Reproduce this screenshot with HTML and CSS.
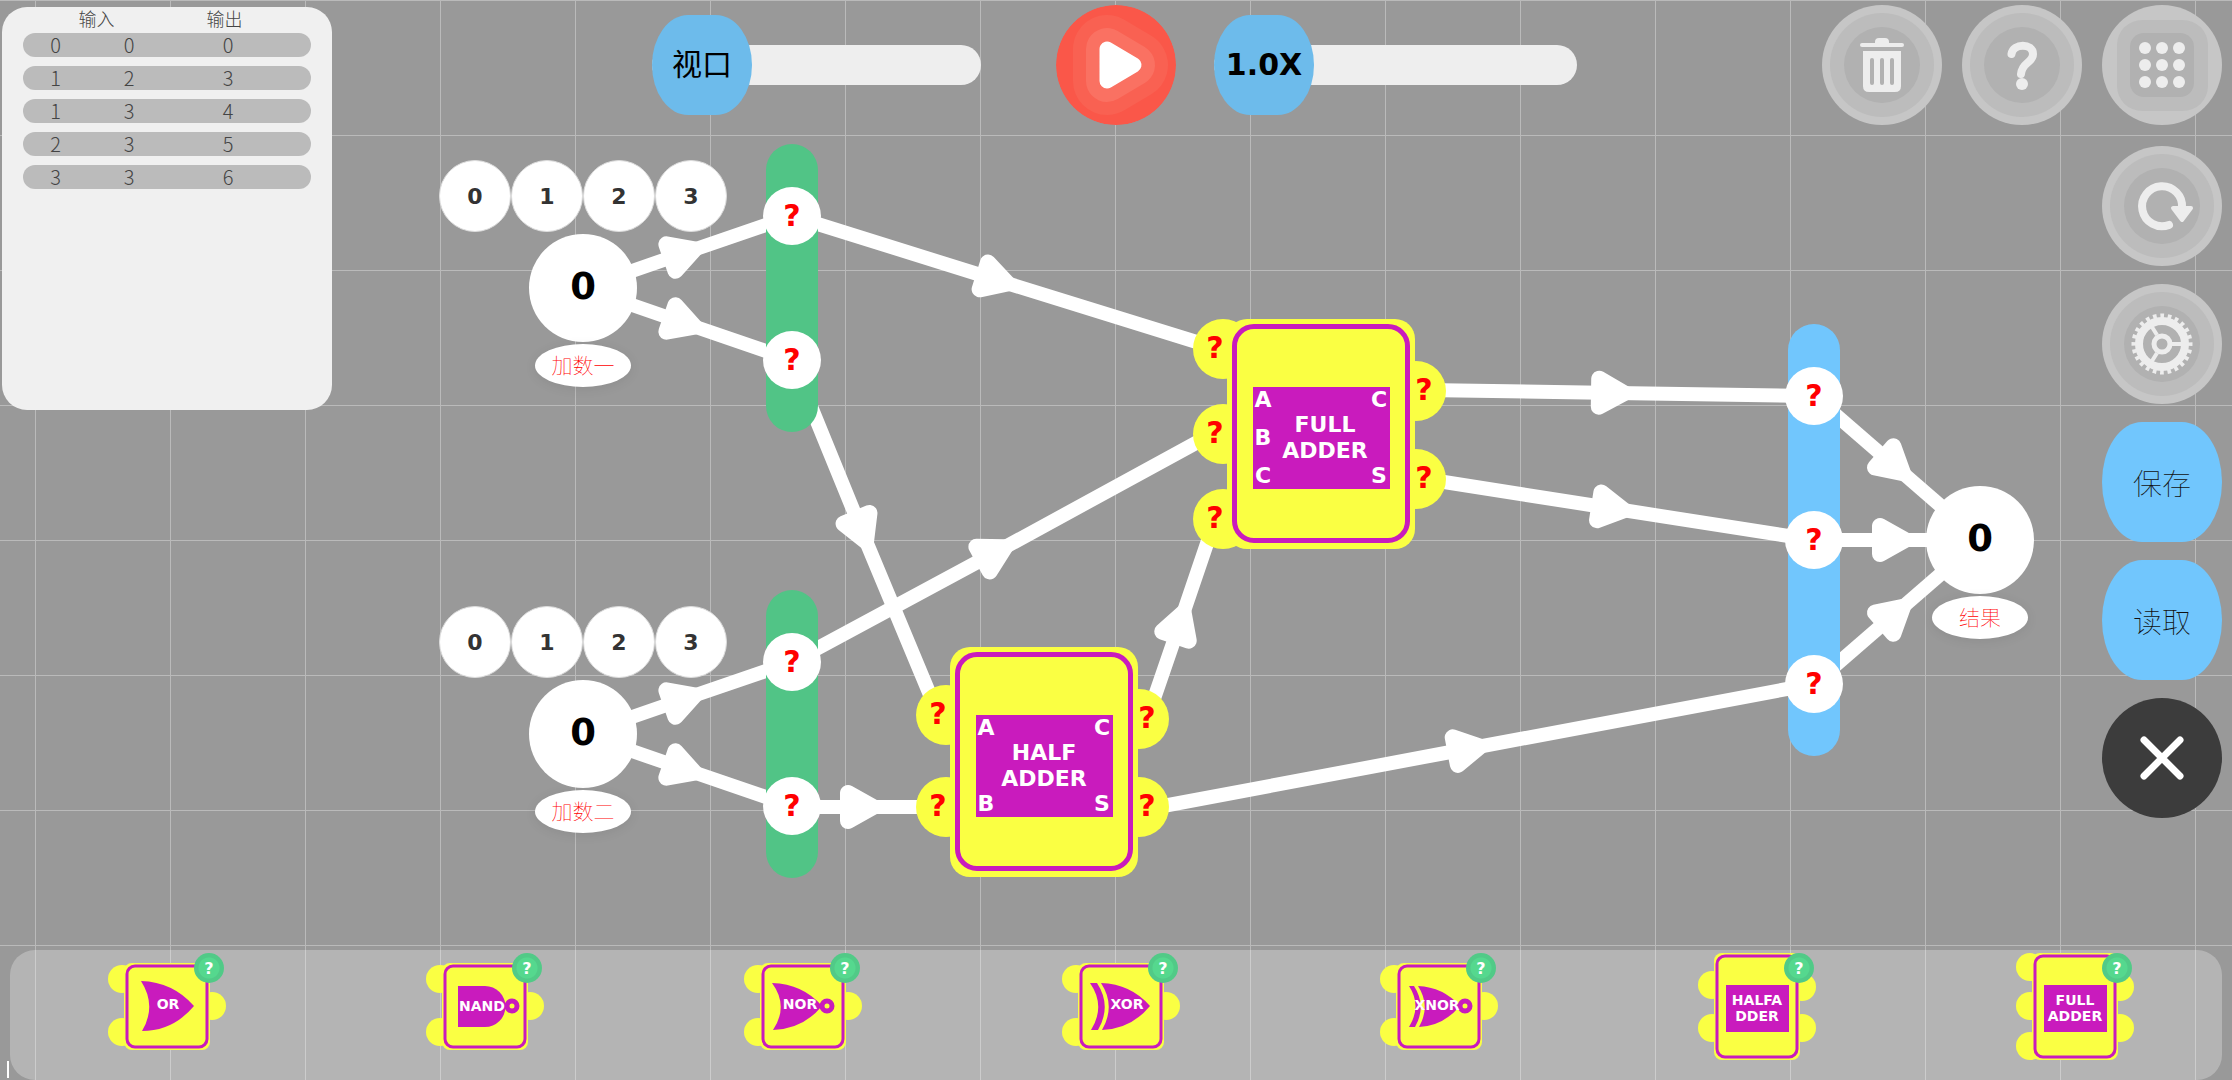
FILE: index.html
```
<!DOCTYPE html>
<html lang="zh-CN">
<head>
<meta charset="utf-8">
<title>加法器</title>
<link rel="stylesheet" href="styles.css">
</head>
<body>
<div class="app">
  <div class="canvas">
    <svg class="links" aria-hidden="true">
      <defs>
        <marker id="arrow" markerUnits="userSpaceOnUse" markerWidth="60" markerHeight="60" refX="3" orient="auto" overflow="visible">
          <path class="arrow" d="M-14 -14V14L11 0Z"/>
        </marker>
      </defs>
      <path d="M583 288L687 252L792 216"/>
      <path d="M583 288L687 324L792 360"/>
      <path d="M583 734L687 698L792 662"/>
      <path d="M583 734L687 770L792 806"/>
      <path d="M792 216L1000 281L1216 348"/>
      <path d="M792 360L863 534L938 714"/>
      <path d="M792 662L998 551L1216 432"/>
      <path d="M792 807L865 807L938 807"/>
      <path d="M1147 719L1181 620L1216 517"/>
      <path d="M1147 809L1472 748L1814 684"/>
      <path d="M1425 390L1616 393L1814 396"/>
      <path d="M1425 479L1616 509L1814 540"/>
      <path d="M1814 396L1897 468L1980 540"/>
      <path d="M1814 540L1897 540L1980 540"/>
      <path d="M1814 684L1897 612L1980 540"/>
    </svg>

    <div class="choices choices-a"><button>0</button><button>1</button><button>2</button><button>3</button></div>
    <div class="value value-a">0</div>
    <div class="tag tag-a">加数一</div>
    <div class="bus bus-a"><span class="pin">?</span><span class="pin">?</span></div>

    <div class="choices choices-b"><button>0</button><button>1</button><button>2</button><button>3</button></div>
    <div class="value value-b">0</div>
    <div class="tag tag-b">加数二</div>
    <div class="bus bus-b"><span class="pin">?</span><span class="pin">?</span></div>

    <div class="bus bus-out"><span class="pin">?</span><span class="pin">?</span><span class="pin">?</span></div>
    <div class="value value-out">0</div>
    <div class="tag tag-out">结果</div>

    <div class="chip chip-half">
      <div class="ports ports-in"><span>?</span><span>?</span></div>
      <div class="ports ports-out"><span>?</span><span>?</span></div>
      <div class="body"><div class="face">
        <div class="names"><span>A</span><span>B</span></div>
        <div class="title">HALF<br>ADDER</div>
        <div class="names names-out"><span>C</span><span>S</span></div>
      </div></div>
    </div>

    <div class="chip chip-full">
      <div class="ports ports-in"><span>?</span><span>?</span><span>?</span></div>
      <div class="ports ports-out"><span>?</span><span>?</span></div>
      <div class="body"><div class="face">
        <div class="names"><span>A</span><span>B</span><span>C</span></div>
        <div class="title">FULL<br>ADDER</div>
        <div class="names names-out"><span>C</span><span>S</span></div>
      </div></div>
    </div>
  </div>

  <section class="truth">
    <table>
      <thead><tr><th colspan="2">输入</th><th>输出</th></tr></thead>
      <tbody>
        <tr><td>0</td><td>0</td><td>0</td></tr>
        <tr><td>1</td><td>2</td><td>3</td></tr>
        <tr><td>1</td><td>3</td><td>4</td></tr>
        <tr><td>2</td><td>3</td><td>5</td></tr>
        <tr><td>3</td><td>3</td><td>6</td></tr>
      </tbody>
    </table>
  </section>

  <header class="toolbar">
    <div class="slider slider-view"><input id="view" type="range" min="0" max="100" value="0"><label for="view">视口</label></div>
    <button class="play" aria-label="运行">
      <svg viewBox="0 0 120 120">
        <circle cx="60" cy="60" r="60" fill="#fa5749"/>
        <g stroke-linejoin="round">
          <path d="M51 44V76L78 60Z" fill="#f96152" stroke="#f96152" stroke-width="68"/>
          <path d="M51 44V76L78 60Z" fill="#fa7162" stroke="#fa7162" stroke-width="42"/>
          <path d="M51 44V76L78 60Z" fill="#fff" stroke="#fff" stroke-width="15"/>
        </g>
      </svg>
    </button>
    <div class="slider slider-speed"><input id="speed" type="range" min="1" max="10" value="1"><label for="speed">1.0X</label></div>
  </header>

  <nav class="rail">
    <div class="rail-top">
      <button class="round" aria-label="删除">
        <svg viewBox="0 0 120 120">
          <circle cx="60" cy="60" r="60" fill="#c6c6c6"/><circle cx="60" cy="60" r="52" fill="#bcbcbc"/><circle cx="60" cy="60" r="38" fill="#b1b1b1"/>
          <rect x="38" y="38" width="44" height="4" rx="2" fill="#ededed"/>
          <path d="M53 38V37Q53 33 57 33H63Q67 33 67 37V38Z" fill="#ededed"/>
          <path d="M41 46H79V81Q79 87 73 87H47Q41 87 41 81Z" fill="#ededed"/>
          <path d="M50 55V78M60 55V78M70 55V78" stroke="#b1b1b1" stroke-width="4" stroke-linecap="round"/>
        </svg>
      </button>
      <button class="round" aria-label="帮助">
        <svg viewBox="0 0 120 120">
          <circle cx="60" cy="60" r="60" fill="#c6c6c6"/><circle cx="60" cy="60" r="52" fill="#bcbcbc"/><circle cx="60" cy="60" r="38" fill="#b1b1b1"/>
          <path d="M49.500 49C51 38 71 38 71 49C71 58 60 57 59 69" fill="none" stroke="#ededed" stroke-width="8" stroke-linecap="round"/>
          <circle cx="60" cy="79" r="6" fill="#ededed"/>
        </svg>
      </button>
      <button class="round" aria-label="关卡">
        <svg viewBox="0 0 120 120">
          <circle cx="60" cy="60" r="60" fill="#c6c6c6"/><rect x="15" y="15" width="91" height="91" rx="25" fill="#bcbcbc"/><rect x="28" y="28" width="64" height="64" rx="14" fill="#b1b1b1"/>
          <g fill="#ededed"><circle cx="43" cy="43" r="6"/><circle cx="60" cy="43" r="6"/><circle cx="77" cy="43" r="6"/><circle cx="43" cy="60" r="6"/><circle cx="60" cy="60" r="6"/><circle cx="77" cy="60" r="6"/><circle cx="43" cy="77" r="6"/><circle cx="60" cy="77" r="6"/><circle cx="77" cy="77" r="6"/></g>
        </svg>
      </button>
    </div>
    <button class="round" aria-label="重置">
      <svg viewBox="0 0 120 120">
        <circle cx="60" cy="60" r="60" fill="#c6c6c6"/><circle cx="60" cy="60" r="52" fill="#bcbcbc"/><circle cx="60" cy="60" r="38" fill="#b1b1b1"/>
        <path d="M67 79A20 20 0 1 1 80 62" fill="none" stroke="#ededed" stroke-width="8" stroke-linecap="round"/>
        <path d="M71 62H89L80 74Z" fill="#ededed" stroke="#ededed" stroke-width="4" stroke-linejoin="round"/>
      </svg>
    </button>
    <button class="round" aria-label="设置">
      <svg viewBox="0 0 120 120">
        <circle cx="60" cy="60" r="60" fill="#c6c6c6"/><circle cx="60" cy="60" r="52" fill="#bcbcbc"/><circle cx="60" cy="60" r="38" fill="#b1b1b1"/>
        <g fill="none" stroke="#ededed">
          <circle cx="60" cy="60" r="23" stroke-width="8"/>
          <circle cx="60" cy="60" r="28" stroke-width="5" stroke-dasharray="3.66 3.67" stroke-dashoffset="1.83"/>
          <circle cx="60" cy="60" r="8" stroke-width="5"/>
          <path d="M70 60H80M55 51L50 43M55 69L50 77" stroke-width="4"/>
        </g>
      </svg>
    </button>
    <button class="soft">保存</button>
    <button class="soft">读取</button>
    <button class="round" aria-label="关闭">
      <svg viewBox="0 0 120 120">
        <circle cx="60" cy="60" r="60" fill="#3c3c3c"/>
        <path d="M42 42L78 78M78 42L42 78" stroke="#fff" stroke-width="7" stroke-linecap="round"/>
      </svg>
    </button>
  </nav>

  <footer class="palette">
    <div class="gate">
      <svg viewBox="0 0 120 130">
        <g class="shell"><circle cx="15" cy="29" r="14"/><circle cx="15" cy="82" r="14"/><circle cx="105" cy="56" r="14"/><rect x="17" y="13" width="86" height="87" rx="8"/></g>
        <rect class="frame" x="20" y="16" width="80" height="81" rx="8"/>
        <path class="mark" d="M34 31Q66 32 87 56Q66 81 35 81Q50 56 34 31Z"/>
        <text x="61" y="59">OR</text>
      </svg>
      <button class="info">?</button>
    </div>
    <div class="gate">
      <svg viewBox="0 0 120 130">
        <g class="shell"><circle cx="15" cy="29" r="14"/><circle cx="15" cy="82" r="14"/><circle cx="105" cy="56" r="14"/><rect x="17" y="13" width="86" height="87" rx="8"/></g>
        <rect class="frame" x="20" y="16" width="80" height="81" rx="8"/>
        <path class="mark" d="M33 36H60A20 20 0 0 1 60 77H33Z"/><circle class="bubble" cx="87" cy="56" r="5"/>
        <text x="57" y="61">NAND</text>
      </svg>
      <button class="info">?</button>
    </div>
    <div class="gate">
      <svg viewBox="0 0 120 130">
        <g class="shell"><circle cx="15" cy="29" r="14"/><circle cx="15" cy="82" r="14"/><circle cx="105" cy="56" r="14"/><rect x="17" y="13" width="86" height="87" rx="8"/></g>
        <rect class="frame" x="20" y="16" width="80" height="81" rx="8"/>
        <path class="mark" d="M29 33Q60 34 79 56Q60 79 30 80Q46 56 29 33Z"/><circle class="bubble" cx="84" cy="56" r="5"/>
        <text x="57" y="59">NOR</text>
      </svg>
      <button class="info">?</button>
    </div>
    <div class="gate">
      <svg viewBox="0 0 120 130">
        <g class="shell"><circle cx="15" cy="29" r="14"/><circle cx="15" cy="82" r="14"/><circle cx="105" cy="56" r="14"/><rect x="17" y="13" width="86" height="87" rx="8"/></g>
        <rect class="frame" x="20" y="16" width="80" height="81" rx="8"/>
        <path class="mark" d="M29 33H36Q51 56 37 80H30Q45 56 29 33ZM40 33Q70 34 89 56Q70 79 41 80Q55 56 40 33Z"/>
        <text x="66" y="59">XOR</text>
      </svg>
      <button class="info">?</button>
    </div>
    <div class="gate">
      <svg viewBox="0 0 120 130">
        <g class="shell"><circle cx="15" cy="29" r="14"/><circle cx="15" cy="82" r="14"/><circle cx="105" cy="56" r="14"/><rect x="17" y="13" width="86" height="87" rx="8"/></g>
        <rect class="frame" x="20" y="16" width="80" height="81" rx="8"/>
        <path class="mark" d="M30 36H35Q48 56 36 77H30Q43 56 30 36ZM39 36Q64 37 81 56Q64 76 40 77Q52 56 39 36Z"/><circle class="bubble" cx="86" cy="56" r="5"/>
        <text x="58" y="60">XNOR</text>
      </svg>
      <button class="info">?</button>
    </div>
    <div class="gate">
      <svg viewBox="0 0 120 130">
        <g class="shell"><circle cx="15" cy="35" r="14"/><circle cx="15" cy="78" r="14"/><circle cx="105" cy="37" r="14"/><circle cx="105" cy="78" r="14"/><rect x="17" y="3" width="86" height="107" rx="8"/></g>
        <rect class="frame" x="20" y="6" width="80" height="101" rx="8"/>
        <rect class="mark" x="29" y="35" width="63" height="47"/>
        <text x="60" y="55">HALFA</text><text x="60" y="71">DDER</text>
      </svg>
      <button class="info">?</button>
    </div>
    <div class="gate">
      <svg viewBox="0 0 120 130">
        <g class="shell"><circle cx="15" cy="17" r="14"/><circle cx="15" cy="56" r="14"/><circle cx="15" cy="96" r="14"/><circle cx="105" cy="37" r="14"/><circle cx="105" cy="78" r="14"/><rect x="17" y="3" width="86" height="107" rx="8"/></g>
        <rect class="frame" x="20" y="6" width="80" height="101" rx="8"/>
        <rect class="mark" x="29" y="35" width="63" height="47"/>
        <text x="60" y="55">FULL</text><text x="60" y="71">ADDER</text>
      </svg>
      <button class="info">?</button>
    </div>
  </footer>
  <span class="caret"></span>
</div>
</body>
</html>
```
FILE: styles.css
```
* { box-sizing: border-box; }

body {
  margin: 0;
  font-family: "DejaVu Sans", "Noto Sans CJK SC", sans-serif;
  background-color: #999;
  background-image:
    linear-gradient(90deg, #bababa 1px, transparent 1px),
    linear-gradient(#bababa 1px, transparent 1px);
  background-size: 135px 135px;
  background-position: 35px 0;
}

button {
  padding: 0;
  border: 0;
  background: none;
  font-family: inherit;
  cursor: pointer;
}

svg { display: block; }

.app {
  position: relative;
  display: grid;
  grid-template-columns: 1fr auto 1fr;
  grid-template-rows: 1fr auto;
  min-height: 100vh;
  overflow: hidden;
}

/* Input / output table */
.truth {
  position: relative;
  width: 330px;
  height: 403px;
  margin: 7px 0 0 2px;
  padding: 0 21px;
  border-radius: 25px;
  background: #f0f0f0;
  font-family: "Noto Sans CJK SC", sans-serif;
  font-weight: 300;
  color: #444;
}
.truth table { display: block; }
.truth thead, .truth tbody { display: grid; row-gap: 9px; }
.truth tr { display: grid; grid-template-columns: 65px 82px 1fr; }
.truth th { height: 26px; padding: 0; font-size: 18px; line-height: 23px; font-weight: 300; }
.truth th:first-child { grid-column: span 2; }
.truth th:last-child { padding-right: 32px; }
.truth td { padding: 0; font-size: 20px; line-height: 24px; text-align: center; }
.truth td:last-child { padding-right: 25px; }
.truth tbody tr { border-radius: 12px; background: #bbb; }

/* Top controls */
.toolbar {
  position: relative;
  display: flex;
  align-items: center;
  align-self: start;
  padding: 5px 3px 0 0;
}
.slider { position: relative; height: 100px; }
.slider-view { width: 329px; margin-right: 75px; }
.slider-speed { width: 363px; margin-left: 38px; }
.slider input {
  appearance: none;
  display: block;
  width: 100%;
  height: 100px;
  margin: 0;
  background: none;
}
.slider input::-webkit-slider-runnable-track {
  height: 40px;
  border-radius: 20px;
  background: #eee;
}
.slider input::-webkit-slider-thumb {
  appearance: none;
  width: 100px;
  height: 100px;
  margin-top: -30px;
  border-radius: 36px / 50px;
  background: #6dbbeb;
}
.slider label {
  position: absolute;
  inset: 0 auto 0 0;
  width: 100px;
  font-size: 30px;
  line-height: 100px;
  text-align: center;
  pointer-events: none;
}
.slider-speed label { font-weight: bold; }
.play { width: 120px; height: 120px; border-radius: 50%; overflow: hidden; }

/* Right-hand actions */
.rail {
  position: relative;
  display: flex;
  flex-direction: column;
  align-items: flex-end;
  gap: 18px;
  padding: 5px 10px 18px 0;
}
.rail-top { display: flex; gap: 20px; margin-bottom: 3px; }
.round, .soft { width: 120px; height: 120px; }
.round { border-radius: 50%; }
.soft {
  border-radius: 40px / 60px;
  background: #71c6fd;
  font-family: "Noto Sans CJK SC", sans-serif;
  font-size: 29px;
  font-weight: 100;
  color: #111;
}

/* Gate palette */
.palette {
  position: relative;
  grid-column: 1 / -1;
  display: grid;
  grid-template-columns: repeat(7, 1fr);
  column-gap: 24px;
  justify-items: center;
  margin: 0 10px;
  padding-left: 10px;
  border-radius: 25px;
  background: rgba(255, 255, 255, 0.27);
}
.gate { position: relative; width: 120px; height: 130px; }
.shell { fill: #faff43; }
.frame { fill: none; stroke: #c91bbd; stroke-width: 3; }
.mark { fill: #c91bbd; }
.bubble { fill: #faff43; stroke: #c91bbd; stroke-width: 5; }
.gate text { fill: #fff; font-size: 14px; font-weight: bold; text-anchor: middle; }
.info {
  position: absolute;
  top: 3px;
  right: 3px;
  width: 30px;
  height: 30px;
  border-radius: 50%;
  background: radial-gradient(circle, #55d88e 10px, #51ca87 11px);
  font-size: 16px;
  font-weight: bold;
  color: #fff;
}
.caret {
  position: absolute;
  left: 7px;
  bottom: 2px;
  width: 2px;
  height: 17px;
  background: #fff;
}

/* Circuit canvas */
.canvas { position: absolute; inset: 0; }
.canvas > * { position: absolute; }
.links { inset: 0; width: 100%; height: 100%; }
.links > path { fill: none; stroke: #fff; stroke-width: 14; marker-mid: url(#arrow); }
.arrow { fill: #fff; stroke: #fff; stroke-width: 16; stroke-linejoin: round; }

.choices { display: flex; left: 439px; }
.choices button {
  width: 72px;
  height: 72px;
  border: 1px solid #ddd;
  border-radius: 50%;
  background: #fff;
  font-size: 22px;
  font-weight: bold;
  color: #333;
}
.choices-a { top: 160px; }
.choices-b { top: 606px; }

.value {
  width: 108px;
  height: 108px;
  border-radius: 50%;
  background: #fff;
  font-size: 37px;
  font-weight: bold;
  line-height: 106px;
  text-align: center;
}
.value-a { left: 529px; top: 234px; }
.value-b { left: 529px; top: 680px; }
.value-out { left: 1926px; top: 486px; }

.tag {
  width: 96px;
  height: 43px;
  border-radius: 50%;
  background: #fff;
  box-shadow: 0 2px 12px rgba(0, 0, 0, 0.08);
  font-family: "Noto Sans CJK SC", sans-serif;
  font-size: 21px;
  font-weight: 100;
  line-height: 40px;
  text-align: center;
  color: #f00;
}
.tag-a { left: 535px; top: 344px; }
.tag-b { left: 535px; top: 790px; }
.tag-out { left: 1932px; top: 596px; }

.bus {
  display: flex;
  flex-direction: column;
  align-items: center;
  gap: 86px;
  width: 52px;
  padding: 43px 0;
  border-radius: 26px;
  background: #51c486;
}
.bus-a { left: 766px; top: 144px; }
.bus-b { left: 766px; top: 590px; }
.bus-out { left: 1788px; top: 324px; background: #71c6fd; }
.pin {
  width: 58px;
  height: 58px;
  border-radius: 50%;
  background: #fff;
}
.pin, .ports span {
  flex: none;
  font-size: 30px;
  font-weight: bold;
  line-height: 58px;
  text-align: center;
  color: #f00;
}

.chip { width: 188px; height: 230px; }
.chip-half { left: 950px; top: 647px; }
.chip-full { left: 1227px; top: 319px; }
.body {
  position: relative;
  height: 100%;
  padding: 5px 5px 6px;
  border-radius: 20px;
  background: #faff43;
}
.face {
  display: grid;
  grid-template-columns: 20px 1fr 20px;
  height: 100%;
  padding: 58px 16px 49px;
  border: 5px solid #c91bbd;
  border-radius: 22px;
  background: linear-gradient(#c91bbd, #c91bbd) 50% 58px / 137px 102px no-repeat;
  font-size: 22px;
  font-weight: bold;
  line-height: 26px;
  color: #fff;
}
.title { margin: 25px -12px 0; text-align: center; }
.chip-full .title { margin: 25px -16px 0 -8px; }
.names { display: flex; flex-direction: column; justify-content: space-between; text-align: center; }
.ports {
  position: absolute;
  display: flex;
  flex-direction: column;
}
.ports span { width: 60px; height: 60px; border-radius: 50%; background: #faff43; }
.ports-in { left: -34px; }
.ports-in span { padding-right: 16px; }
.ports-out { right: -31px; gap: 28px; }
.ports-out span { padding-left: 16px; }
.chip-half .ports-in { top: 38px; gap: 32px; }
.chip-half .ports-out { top: 42px; }
.chip-full .ports-in { top: 0; gap: 25px; }
.chip-full .ports-out { top: 42px; }
```
